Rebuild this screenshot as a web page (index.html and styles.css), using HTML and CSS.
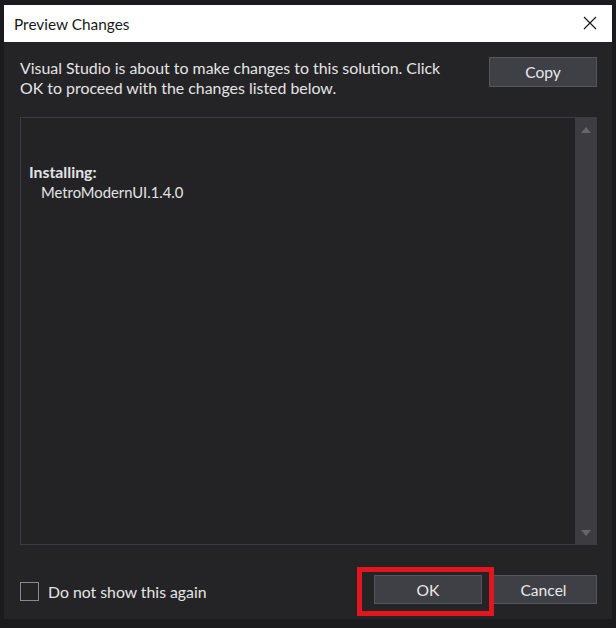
FILE: index.html
```html
<!DOCTYPE html>
<html>
<head>
<meta charset="utf-8">
<link rel="stylesheet" href="styles.css">
</head>
<body>
<div class="screen">
  <div class="dialog">
    <div class="titlebar">
      <span class="title">Preview Changes</span>
      <svg class="close" width="14" height="14" viewBox="0 0 14 14"><path d="M1 1 L13 13 M13 1 L1 13" stroke="#1a1a1a" stroke-width="1.2" fill="none"/></svg>
    </div>
    <div class="body">
      <div class="top">
        <p class="intro">Visual Studio is about to make changes to this solution. Click<br>OK to proceed with the changes listed below.</p>
        <button class="btn copy">Copy</button>
      </div>
      <div class="list">
        <div class="list-content">
          <div class="heading">Installing:</div>
          <div class="item">MetroModernUI.1.4.0</div>
        </div>
        <div class="scrollbar">
          <svg width="10" height="6" viewBox="0 0 10 6"><path d="M0 6 L5 0 L10 6 Z" fill="#67676b"/></svg>
          <svg width="10" height="6" viewBox="0 0 10 6"><path d="M0 0 L10 0 L5 6 Z" fill="#67676b"/></svg>
        </div>
      </div>
      <div class="footer">
        <label class="check"><span class="box"></span><span>Do not show this again</span></label>
        <div class="buttons">
          <div class="highlight-wrap">
            <button class="btn ok">OK</button>
            <span class="highlight"></span>
          </div>
          <button class="btn cancel">Cancel</button>
        </div>
      </div>
    </div>
  </div>
</div>
</body>
</html>
```
FILE: styles.css
```css
html, body {
  margin: 0;
  padding: 0;
  background: #1b1b1e;
}
.screen {
  width: 616px;
  height: 628px;
  padding-top: 5px;
  padding-left: 4px;
  box-sizing: border-box;
  overflow: hidden;
}
.dialog {
  width: 608px;
  height: 614px;
  background: #242427;
  font-family: "Lato", "Liberation Sans", sans-serif;
  color: #e4e4e4;
  display: flex;
  flex-direction: column;
}
.titlebar {
  height: 37px;
  background: #ffffff;
  display: flex;
  align-items: center;
  justify-content: space-between;
  padding: 0 15px 0 10px;
  flex-shrink: 0;
}
.title {
  color: #1a1a1a;
  font-size: 15.4px;
  margin-top: 1px;
}
.close {
  display: block;
  margin-top: -1px;
}
.body {
  padding: 15px 15px 0 16px;
  display: flex;
  flex-direction: column;
}
.top {
  display: flex;
  justify-content: space-between;
  align-items: flex-start;
}
.intro {
  margin: 1px 0 0 0;
  font-size: 15.9px;
  line-height: 20px;
}
.btn {
  font-family: "Lato", "Liberation Sans", sans-serif;
  font-size: 15.6px;
  color: #e8e8e8;
  background: #3f3f46;
  border: 1px solid #56565c;
  padding: 0;
  margin: 0;
}
.copy {
  width: 108px;
  height: 30px;
}
.list {
  margin-top: 19px;
  height: 428px;
  border: 1px solid #3c3c40;
  box-sizing: border-box;
  background: #232326;
  display: flex;
}
.list-content {
  flex: 1;
  padding: 44px 0 0 8px;
}
.heading {
  font-weight: bold;
  font-size: 15.8px;
  line-height: 20px;
}
.item {
  padding-left: 12px;
  font-size: 14.8px;
  line-height: 20px;
}
.scrollbar {
  width: 21px;
  background: #3d3d41;
  display: flex;
  flex-direction: column;
  justify-content: space-between;
  align-items: center;
  padding: 9px 0 8px;
}
.scrollbar svg {
  display: block;
}
.footer {
  margin-top: 30px;
  display: flex;
  justify-content: space-between;
  align-items: center;
}
.check {
  display: flex;
  align-items: center;
  gap: 9px;
  font-size: 15.8px;
  margin-top: 3px;
}
.box {
  width: 17px;
  height: 17px;
  border: 1px solid #8a8a8e;
  background: #242427;
}
.buttons {
  display: flex;
  gap: 8px;
}
.highlight-wrap {
  position: relative;
}
.ok {
  width: 108px;
  height: 29px;
  display: block;
}
.cancel {
  width: 107px;
  height: 29px;
}
.highlight {
  position: absolute;
  left: -17px;
  top: -8px;
  right: -12px;
  bottom: -12px;
  border: 5px solid #e3161f;
  pointer-events: none;
}
```
